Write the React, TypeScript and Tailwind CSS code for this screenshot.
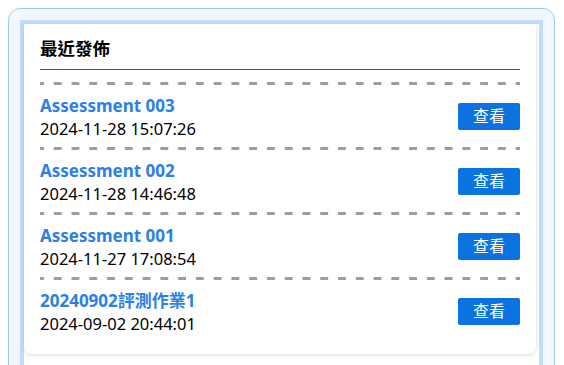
const items = [
  { title: "Assessment 003", date: "2024-11-28 15:07:26" },
  { title: "Assessment 002", date: "2024-11-28 14:46:48" },
  { title: "Assessment 001", date: "2024-11-27 17:08:54" },
  { title: "20240902評測作業1", date: "2024-09-02 20:44:01" },
];

const RecentList = () => {
  return (
    <div className="w-[512px] bg-white rounded-b-lg shadow-[0_1px_4px_rgba(0,0,0,0.15)] px-4 pt-[12px] pb-3">
      <h3 className="text-[17.5px] font-bold leading-[24px] text-black pb-[9px] border-b border-[#555]">
        最近發佈
      </h3>
      <div className="mt-3">
        {items.map((item) => (
          <div key={item.title}>
            <div className="h-[3px] bg-[linear-gradient(to_right,#9d9d9d_45%,transparent_45%)] bg-[length:17.78px_3px] bg-[position:-4px_0] bg-repeat-x" />
            <div className="pt-[9px] pb-[7px] flex items-center justify-between">
              <div>
                <div className="text-[17px] font-bold leading-[23px] text-[#2b7fe8]">
                  {item.title}
                </div>
                <div className="text-[16.5px] leading-[23px] text-black">
                  {item.date}
                </div>
              </div>
              <button className="w-[62px] h-[27px] rounded-[2px] bg-[#0b73e0] text-white text-[16px] leading-none mt-[-2px]">
                查看
              </button>
            </div>
          </div>
        ))}
      </div>
    </div>
  );
};

export default function App() {
  return (
    <div
      className="h-[365px] overflow-hidden bg-white p-2"
      style={{ fontFamily: '"Noto Sans", "Noto Sans CJK TC", sans-serif' }}
    >
      <div className="w-[547px] h-[420px] rounded-xl border border-[#a3c8f2] bg-[#f1f7ff] p-[11px]">
        <div className="h-[400px] border-4 border-b-0 border-[#c4dcfb] bg-white">
          <RecentList />
        </div>
      </div>
    </div>
  );
}
